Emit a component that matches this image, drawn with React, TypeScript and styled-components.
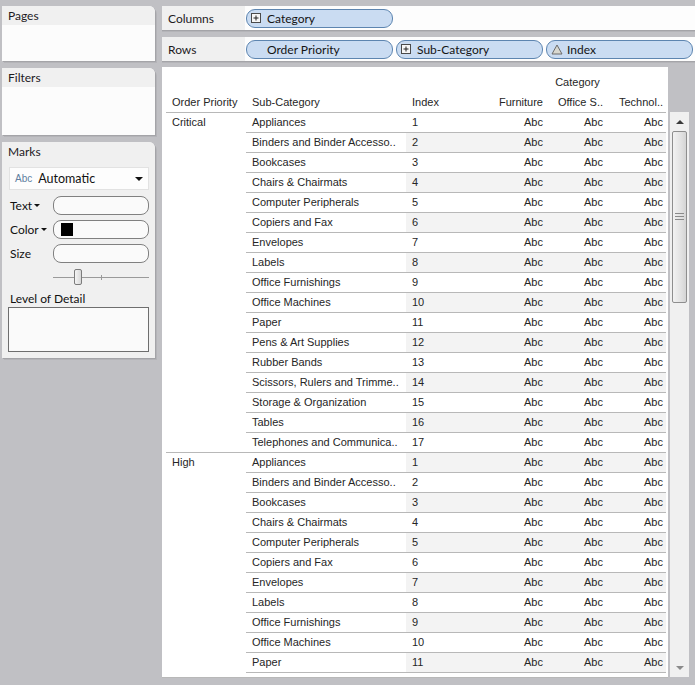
import React from "react";
import styled, { createGlobalStyle } from "styled-components";

const GlobalStyle = createGlobalStyle`
  html, body { margin: 0; padding: 0; background: #c0c0c4; overflow: hidden; }
  body { font-family: Lato, "Noto Sans", sans-serif; }
  #root { width: 695px; height: 685px; }
`;

const Page = styled.div`
  display: flex;
  align-items: flex-start;
  width: 695px;
  height: 685px;
  box-sizing: border-box;
  padding: 6px 0 0 2px;
`;

const LeftColumn = styled.div`
  width: 153px;
  flex-shrink: 0;
  display: flex;
  flex-direction: column;
  gap: 7px;
  margin-right: 7px;
`;

const Card = styled.div<{ $h: number; $bg?: string }>`
  height: ${(p) => p.$h}px;
  background: ${(p) => p.$bg || "#fcfcfc"};
  border-top-right-radius: 6px;
  box-shadow: 1px 1px 0 #a4a4a8, 2px 2px 0 #b4b4b8;
  display: flex;
  flex-direction: column;
  overflow: hidden;
`;

const CardHeader = styled.div`
  height: 19px;
  line-height: 19px;
  background: #f0f0f0;
  padding-left: 6px;
  font-size: 12px;
  color: #1e1a1e;
`;

const MarksBody = styled.div`
  display: flex;
  flex-direction: column;
  padding: 0 6px 0 6px;
`;

const Dropdown = styled.div`
  margin: 6px 0 0 1px;
  width: 140px;
  height: 23px;
  box-sizing: border-box;
  background: #fdfdfd;
  border: 1px solid #e2e2e2;
  display: flex;
  align-items: center;
  padding: 0 5px 0 5px;
`;

const AbcTag = styled.span`
  font-family: "Liberation Sans", Arial, sans-serif;
  font-size: 10px;
  color: #5f7fa0;
  margin-right: 6px;
`;

const DropdownText = styled.span`
  font-size: 12.5px;
  color: #111;
  flex: 1;
`;

const PropRow = styled.div<{ $mt: number }>`
  display: grid;
  grid-template-columns: 43px 96px;
  align-items: center;
  margin-top: ${(p) => p.$mt}px;
  padding-left: 2px;
`;

const PropLabel = styled.span`
  font-size: 12px;
  color: #111;
  display: flex;
  align-items: center;
  gap: 2px;
`;

const PropInput = styled.div`
  height: 19px;
  box-sizing: border-box;
  border: 1px solid #808080;
  border-radius: 8px;
  background: #fafafa;
  display: flex;
  align-items: center;
  padding-left: 7px;
`;

const Swatch = styled.div`
  width: 12px;
  height: 13px;
  background: #000;
`;

const SliderRow = styled.div`
  margin: 6px 0 0 45px;
  width: 96px;
  height: 17px;
  position: relative;
`;

const SliderTrack = styled.div`
  position: absolute;
  left: 0;
  right: 0;
  top: 8px;
  height: 1px;
  background: #9a9a9a;
`;

const SliderTick = styled.div`
  position: absolute;
  left: 48px;
  top: 6px;
  width: 1px;
  height: 5px;
  background: #9a9a9a;
`;

const SliderThumb = styled.div`
  position: absolute;
  left: 21px;
  top: 0;
  width: 8px;
  height: 16px;
  box-sizing: border-box;
  border: 1px solid #7c7c7c;
  border-radius: 2px;
  background: linear-gradient(to right, #f4f4f4, #d8d8d8);
`;

const DetailLabel = styled.div`
  margin: 5px 0 0 2px;
  font-size: 12px;
  line-height: 16px;
  color: #111;
`;

const DetailBox = styled.div`
  width: 141px;
  height: 45px;
  box-sizing: border-box;
  border: 1px solid #6e6e6e;
  background: #fafafa;
`;

const RightColumn = styled.div`
  flex: 1;
  display: flex;
  flex-direction: column;
`;

const Shelf = styled.div<{ $mt?: number }>`
  height: 24px;
  margin-top: ${(p) => p.$mt || 0}px;
  display: flex;
  align-items: center;
  background: #fdfdfd;
  box-shadow: 0 1px 0 #a4a4a8, 0 2px 0 #b4b4b8;
`;

const ShelfLabel = styled.div`
  width: 77px;
  height: 100%;
  background: #f0f0f0;
  padding-left: 6px;
  display: flex;
  align-items: center;
  font-size: 12px;
  color: #1e1a1e;
  margin-right: 1px;
`;

const Pills = styled.div`
  display: flex;
  gap: 3px;
`;

const Pill = styled.div`
  width: 147px;
  height: 19px;
  box-sizing: border-box;
  background: #cadcf2;
  border: 1px solid #5d85b0;
  border-radius: 9px;
  display: flex;
  align-items: center;
  padding-left: 20px;
  position: relative;
  font-size: 12px;
  color: #141414;
`;

const PillIcon = styled.span`
  position: absolute;
  left: 4px;
  top: 3px;
  display: flex;
`;

const ViewRow = styled.div`
  margin-top: 6px;
  display: flex;
  height: 611px;
`;

const Table = styled.div`
  width: 506px;
  height: 611px;
  box-sizing: border-box;
  background: #fff;
  overflow: hidden;
  padding: 0 2px 0 4px;
  border-bottom: 1px solid #b8b8b8;
  font-family: "Liberation Sans", Arial, sans-serif;
  font-size: 11px;
  color: #262626;
`;

const HeaderBlock = styled.div`
  padding-top: 5px;
  border-bottom: 1px solid #b8b8b8;
`;

const HeaderGrid = styled.div`
  display: grid;
  grid-template-columns: 80px 160px 80px 60px 60px 60px;
  grid-auto-rows: 20px;
  align-items: center;
`;

const HeadCell = styled.div<{ $align?: string; $span?: string }>`
  padding: 0 3px 0 6px;
  text-align: ${(p) => p.$align || "left"};
  grid-column: ${(p) => p.$span || "auto"};
  white-space: nowrap;
  overflow: hidden;
`;

const Group = styled.div`
  display: flex;
  border-bottom: 1px solid #b8b8b8;
`;

const PriorityCell = styled.div`
  width: 80px;
  flex-shrink: 0;
  padding-left: 6px;
  box-sizing: border-box;
  height: 19px;
  line-height: 19px;
`;

const SubRows = styled.div`
  flex: 1;
  display: flex;
  flex-direction: column;
`;

const SubRow = styled.div<{ $last: boolean }>`
  display: grid;
  grid-template-columns: 160px 80px 60px 60px 60px;
  height: 19px;
  line-height: 18px;
  border-bottom: ${(p) => (p.$last ? "none" : "1px solid #b8b8b8")};
`;

const SubCell = styled.div`
  padding-left: 6px;
  white-space: nowrap;
  overflow: hidden;
`;

const IndexCell = styled.div<{ $band: boolean }>`
  padding-left: 6px;
  background: ${(p) => (p.$band ? "#f3f3f3" : "transparent")};
`;

const MeasureCell = styled.div<{ $band: boolean }>`
  padding-right: 3px;
  text-align: right;
  background: ${(p) => (p.$band ? "#f3f3f3" : "transparent")};
`;

const Scrollbar = styled.div`
  margin: 45px 0 0 2px;
  width: 19px;
  height: 565px;
  background: #f0f0f0;
  display: flex;
  flex-direction: column;
  align-items: center;
`;

const ScrollArrow = styled.div`
  height: 19px;
  display: flex;
  align-items: center;
  justify-content: center;
`;

const ScrollThumb = styled.div`
  width: 15px;
  height: 172px;
  box-sizing: border-box;
  border: 1px solid #8e8e8e;
  border-radius: 2px;
  background: linear-gradient(to right, #f2f2f2, #e2e2e2 60%, #d4d4d4);
  display: flex;
  align-items: center;
  justify-content: center;
`;

const ScrollTrack = styled.div`
  flex: 1;
`;

const subCategories = [
  "Appliances",
  "Binders and Binder Accesso..",
  "Bookcases",
  "Chairs & Chairmats",
  "Computer Peripherals",
  "Copiers and Fax",
  "Envelopes",
  "Labels",
  "Office Furnishings",
  "Office Machines",
  "Paper",
  "Pens & Art Supplies",
  "Rubber Bands",
  "Scissors, Rulers and Trimme..",
  "Storage & Organization",
  "Tables",
  "Telephones and Communica..",
];

const groups = [
  { name: "Critical", rows: subCategories },
  { name: "High", rows: subCategories.slice(0, 12) },
];

const PlusIcon = () => (
  <svg width="10" height="10" viewBox="0 0 10 10">
    <rect x="0.5" y="0.5" width="9" height="9" fill="#f6f6f6" stroke="#4a4a4a" />
    <path d="M2.5 5h5M5 2.5v5" stroke="#222" strokeWidth="1" />
  </svg>
);

const TriangleIcon = () => (
  <svg width="12" height="11" viewBox="0 0 12 11">
    <path d="M6 1L11 10H1Z" fill="#d8d8d0" stroke="#6a6a6a" strokeWidth="1" strokeLinejoin="round" />
  </svg>
);

const Caret = ({ size = 4 }: { size?: number }) => (
  <svg width={size * 2} height={size} viewBox={`0 0 ${size * 2} ${size}`}>
    <path d={`M0 0H${size * 2}L${size} ${size}Z`} fill="#111" />
  </svg>
);

const App: React.FC = () => {
  let global = 0;
  return (
    <>
      <GlobalStyle />
      <Page>
        <LeftColumn>
          <Card $h={55}>
            <CardHeader>Pages</CardHeader>
          </Card>
          <Card $h={67}>
            <CardHeader>Filters</CardHeader>
          </Card>
          <Card $h={216} $bg="#f0f0f0">
            <CardHeader>Marks</CardHeader>
            <MarksBody>
              <Dropdown>
                <AbcTag>Abc</AbcTag>
                <DropdownText>Automatic</DropdownText>
                <Caret size={4} />
              </Dropdown>
              <PropRow $mt={6}>
                <PropLabel>
                  Text <Caret size={3} />
                </PropLabel>
                <PropInput />
              </PropRow>
              <PropRow $mt={5}>
                <PropLabel>
                  Color <Caret size={3} />
                </PropLabel>
                <PropInput>
                  <Swatch />
                </PropInput>
              </PropRow>
              <PropRow $mt={5}>
                <PropLabel>Size</PropLabel>
                <PropInput />
              </PropRow>
              <SliderRow>
                <SliderTrack />
                <SliderTick />
                <SliderThumb />
              </SliderRow>
              <DetailLabel>Level of Detail</DetailLabel>
              <DetailBox />
            </MarksBody>
          </Card>
        </LeftColumn>
        <RightColumn>
          <Shelf>
            <ShelfLabel>Columns</ShelfLabel>
            <Pills>
              <Pill>
                <PillIcon>
                  <PlusIcon />
                </PillIcon>
                Category
              </Pill>
            </Pills>
          </Shelf>
          <Shelf $mt={7}>
            <ShelfLabel>Rows</ShelfLabel>
            <Pills>
              <Pill>Order Priority</Pill>
              <Pill>
                <PillIcon>
                  <PlusIcon />
                </PillIcon>
                Sub-Category
              </Pill>
              <Pill>
                <PillIcon>
                  <TriangleIcon />
                </PillIcon>
                Index
              </Pill>
            </Pills>
          </Shelf>
          <ViewRow>
            <Table>
              <HeaderBlock>
                <HeaderGrid>
                  <HeadCell $span="4 / 7" $align="center">
                    Category
                  </HeadCell>
                  <HeadCell $span="1 / 2">Order Priority</HeadCell>
                  <HeadCell>Sub-Category</HeadCell>
                  <HeadCell>Index</HeadCell>
                  <HeadCell $align="right">Furniture</HeadCell>
                  <HeadCell $align="right">Office S..</HeadCell>
                  <HeadCell $align="right">Technol..</HeadCell>
                </HeaderGrid>
              </HeaderBlock>
              {groups.map((g) => (
                <Group key={g.name}>
                  <PriorityCell>{g.name}</PriorityCell>
                  <SubRows>
                    {g.rows.map((s, i) => {
                      global += 1;
                      const band = global % 2 === 0;
                      return (
                        <SubRow key={s} $last={i === subCategories.length - 1}>
                          <SubCell>{s}</SubCell>
                          <IndexCell $band={band}>{i + 1}</IndexCell>
                          <MeasureCell $band={band}>Abc</MeasureCell>
                          <MeasureCell $band={band}>Abc</MeasureCell>
                          <MeasureCell $band={band}>Abc</MeasureCell>
                        </SubRow>
                      );
                    })}
                  </SubRows>
                </Group>
              ))}
            </Table>
            <Scrollbar>
              <ScrollArrow>
                <svg width="8" height="4" viewBox="0 0 8 4">
                  <path d="M0 4H8L4 0Z" fill="#3a3a3a" />
                </svg>
              </ScrollArrow>
              <ScrollThumb>
                <svg width="9" height="8" viewBox="0 0 9 8">
                  <path d="M0 0.5H9M0 3.5H9M0 6.5H9" stroke="#8a8a8a" strokeWidth="1" />
                </svg>
              </ScrollThumb>
              <ScrollTrack />
              <ScrollArrow>
                <svg width="8" height="4" viewBox="0 0 8 4">
                  <path d="M0 0H8L4 4Z" fill="#8a8a8a" />
                </svg>
              </ScrollArrow>
            </Scrollbar>
          </ViewRow>
        </RightColumn>
      </Page>
    </>
  );
};

export default App;
